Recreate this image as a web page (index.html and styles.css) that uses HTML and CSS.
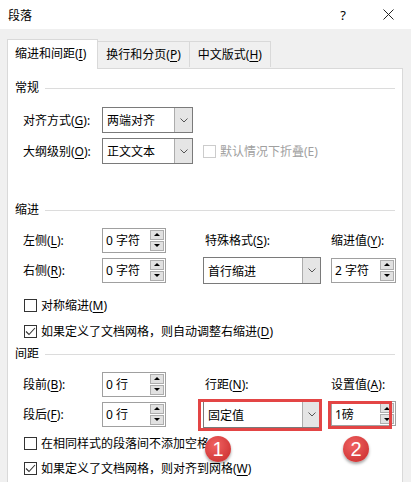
FILE: index.html
```html
<!DOCTYPE html>
<html lang="zh-CN">
<head>
<meta charset="UTF-8">
<title>段落</title>
<link rel="stylesheet" href="styles.css">
</head>
<body>
<div class="titlebar">
    <span class="title">段落</span>
    <span class="tb-btns">
        <span class="help">?</span>
        <svg class="close" width="11" height="11" viewBox="0 0 11 11"><path d="M0.5 0.5 L10.5 10.5 M10.5 0.5 L0.5 10.5" stroke="#222" stroke-width="1"/></svg>
    </span>
</div>
<div class="dlg">
    <div class="tabs">
        <div class="tab active">缩进和间距(<u>I</u>)</div>
        <div class="tab">换行和分页(<u>P</u>)</div>
        <div class="tab">中文版式(<u>H</u>)</div>
    </div>
    <div class="panel">
        <div class="group-title"><span>常规</span></div>
        <div class="general">
            <div class="lbl">对齐方式(<u>G</u>):</div>
            <div class="select sel-short">两端对齐<span class="drop"><svg width="8" height="5" viewBox="0 0 8 5"><path d="M0.5 0.5 L4 4 L7.5 0.5" fill="none" stroke="#555"/></svg></span></div>
            <div></div>
            <div class="lbl">大纲级别(<u>O</u>):</div>
            <div class="select sel-short">正文文本<span class="drop"><svg width="8" height="5" viewBox="0 0 8 5"><path d="M0.5 0.5 L4 4 L7.5 0.5" fill="none" stroke="#555"/></svg></span></div>
            <div class="check disabled"><span class="box"></span>默认情况下折叠(E)</div>
        </div>

        <div class="group-title gap-indent"><span>缩进</span></div>
        <div class="grid4 indent">
            <div class="lbl">左侧(<u>L</u>):</div>
            <div class="spin">0 字符<span class="arrows"><span class="up"></span><span class="down"></span></span></div>
            <div class="lbl lbl3">特殊格式(<u>S</u>):</div>
            <div class="lbl">缩进值(<u>Y</u>):</div>
            <div class="lbl">右侧(<u>R</u>):</div>
            <div class="spin">0 字符<span class="arrows"><span class="up"></span><span class="down"></span></span></div>
            <div class="cell"><div class="select sel-wide">首行缩进<span class="drop"><svg width="8" height="5" viewBox="0 0 8 5"><path d="M0.5 0.5 L4 4 L7.5 0.5" fill="none" stroke="#555"/></svg></span></div></div>
            <div class="spin spin-wide">2 字符<span class="arrows"><span class="up"></span><span class="down"></span></span></div>
        </div>
        <div class="check first"><span class="box"></span>对称缩进(<u>M</u>)</div>
        <div class="check"><span class="box"><svg width="13" height="13" viewBox="0 0 13 13"><path d="M2 6.5 L5 9.5 L11 3" fill="none" stroke="#333" stroke-width="1.1"/></svg></span>如果定义了文档网格，则自动调整右缩进(<u>D</u>)</div>

        <div class="group-title gap-spacing"><span>间距</span></div>
        <div class="grid4 spacing">
            <div class="lbl">段前(<u>B</u>):</div>
            <div class="spin">0 行<span class="arrows"><span class="up"></span><span class="down"></span></span></div>
            <div class="lbl lbl3">行距(<u>N</u>):</div>
            <div class="lbl">设置值(<u>A</u>):</div>
            <div class="lbl">段后(<u>F</u>):</div>
            <div class="spin">0 行<span class="arrows"><span class="up"></span><span class="down"></span></span></div>
            <div class="cell">
                <div class="select sel-wide">固定值<span class="drop"><svg width="8" height="5" viewBox="0 0 8 5"><path d="M0.5 0.5 L4 4 L7.5 0.5" fill="none" stroke="#555"/></svg></span></div>
                <div class="mark mark1"></div>
                <div class="badge badge1">1</div>
            </div>
            <div class="cell">
                <div class="spin spin-wide">1磅<span class="arrows"><span class="up"></span><span class="down"></span></span></div>
                <div class="mark mark2"></div>
                <div class="badge badge2">2</div>
            </div>
        </div>
        <div class="check tight"><span class="box"></span>在相同样式的段落间不添加空格</div>
        <div class="check tight"><span class="box"><svg width="13" height="13" viewBox="0 0 13 13"><path d="M2 6.5 L5 9.5 L11 3" fill="none" stroke="#333" stroke-width="1.1"/></svg></span>如果定义了文档网格，则对齐到网格(<u>W</u>)</div>
    </div>
</div>
</body>
</html>
```

FILE: styles.css
```css
html, body { margin: 0; padding: 0;
    height: 100%; overflow: hidden;
}
body { font-family: "Noto Sans", "Noto Sans CJK SC", sans-serif;
    font-size: 12px; color: #000; background: #fff;
}
u { text-decoration: underline; text-underline-offset: 2px; }

.titlebar { height: 29px; display: flex; align-items: center;
    justify-content: space-between; padding: 0 17px 0 8px;
    background: #fff;
}
.title { line-height: 18px; padding-top: 2px; }
.tb-btns { display: flex; align-items: center; gap: 37px; }
.help { font-size: 13px; line-height: 16px; }

.dlg { background: #f0f0f0; height: calc(100% - 29px);
    padding-top: 10px; box-sizing: border-box;
    display: flex; flex-direction: column;
}
.tabs { display: flex; align-items: flex-start; padding-left: 7px; }
.tab { height: 25px; line-height: 25px; margin-top: 2px;
    padding: 0 8px; border: 1px solid #d9d9d9; border-bottom: none;
    border-left: none; background: #f0f0f0; white-space: nowrap;
}
.tab.active { height: 29px; line-height: 28px; margin-top: 0;
    margin-bottom: -1px; background: #fff; border-left: 1px solid #d9d9d9;
    padding: 0 11px 0 7px; position: relative; z-index: 1;
}
.panel { margin: 0 8px 0 7px; background: #fff;
    border: 1px solid #d9d9d9; border-bottom: none;
    flex: 1; min-height: 0; overflow: hidden;
}

.group-title { display: flex; align-items: center; height: 18px;
    line-height: 18px; padding: 0 7px; margin-top: 10px;
}
.group-title::after { content: ""; flex: 1; height: 1px;
    background: #dcdcdc; margin-left: 6px;
}
.gap-indent { margin-top: 37px; }
.gap-spacing { margin-top: 5px; }

.lbl { display: flex; align-items: center; white-space: nowrap; }
.lbl3 { padding-left: 2px; }

.general { display: grid; grid-template-columns: 79px 91px auto;
    grid-template-rows: 26px 26px; row-gap: 5px;
    margin-top: 10px; padding-left: 15px;
}
.grid4 { display: grid; grid-template-columns: 79px 101px 128px 65px;
    grid-template-rows: 26px 26px; row-gap: 4px;
    margin-top: 8px; padding-left: 15px;
}
.spacing { margin-top: 8px; }
.cell { position: relative; }

.select { position: relative; box-sizing: border-box; height: 26px;
    border: 1px solid #7a7a7a; background: #fff; padding-left: 4px;
    display: flex; align-items: center; white-space: nowrap;
}
.sel-short { width: 91px; }
.sel-wide { width: 118px; height: 27px; }
.drop { position: absolute; right: 0; top: 0; bottom: 0; width: 17px;
    background: #e5e5e5; border-left: 1px solid #acacac;
    display: flex; align-items: center; justify-content: center;
}

.spin { position: relative; box-sizing: border-box; width: 64px;
    height: 25px; align-self: center; border: 1px solid #a0a0a0;
    background: #fff; padding-left: 3px; display: flex;
    align-items: center; white-space: nowrap;
}
.spin-wide { width: 65px; }
.arrows { position: absolute; right: 1px; top: 1px; bottom: 1px;
    width: 14px; display: flex; flex-direction: column; gap: 1px;
}
.arrows span { flex: 1; background: #e1e1e1; border: 1px solid #adadad;
    display: flex; align-items: center; justify-content: center;
}
.arrows .up::before { content: ""; border-left: 3px solid transparent;
    border-right: 3px solid transparent; border-bottom: 3px solid #000;
}
.arrows .down::before { content: ""; border-left: 3px solid transparent;
    border-right: 3px solid transparent; border-top: 3px solid #000;
}

.check { display: flex; align-items: center; height: 18px;
    padding-left: 16px; margin-top: 8px; white-space: nowrap;
}
.check.first { margin-top: 13px; }
.check.tight { margin-top: 7px; }
.general .check { padding-left: 10px; margin-top: 0; height: 26px; }
.box { width: 13px; height: 13px; box-sizing: border-box;
    border: 1px solid #333; margin-right: 4px; position: relative;
    background: #fff;
}
.box svg { position: absolute; left: -1px; top: -1px; }
.check.disabled { color: #a0a0a0; }
.check.disabled .box { border-color: #cccccc; }

.mark { position: absolute; border: 3px solid #e34545; box-sizing: border-box; }
.mark1 { left: -5px; top: -2px; width: 124px; height: 32px; }
.mark2 { left: -3px; top: 0; width: 64px; height: 28px; }
.badge { position: absolute; top: 35px; width: 26px; height: 26px;
    border-radius: 50%; z-index: 3; color: #fff;
    background: radial-gradient(circle at 40% 35%, #f06262, #d33a3a 70%);
    box-shadow: 0 2px 3px rgba(0,0,0,0.35);
    font-family: "Liberation Sans", sans-serif; font-size: 20px;
    line-height: 26px; text-align: center;
}
.badge1 { left: 2px; }
.badge2 { left: 12px; }
```
